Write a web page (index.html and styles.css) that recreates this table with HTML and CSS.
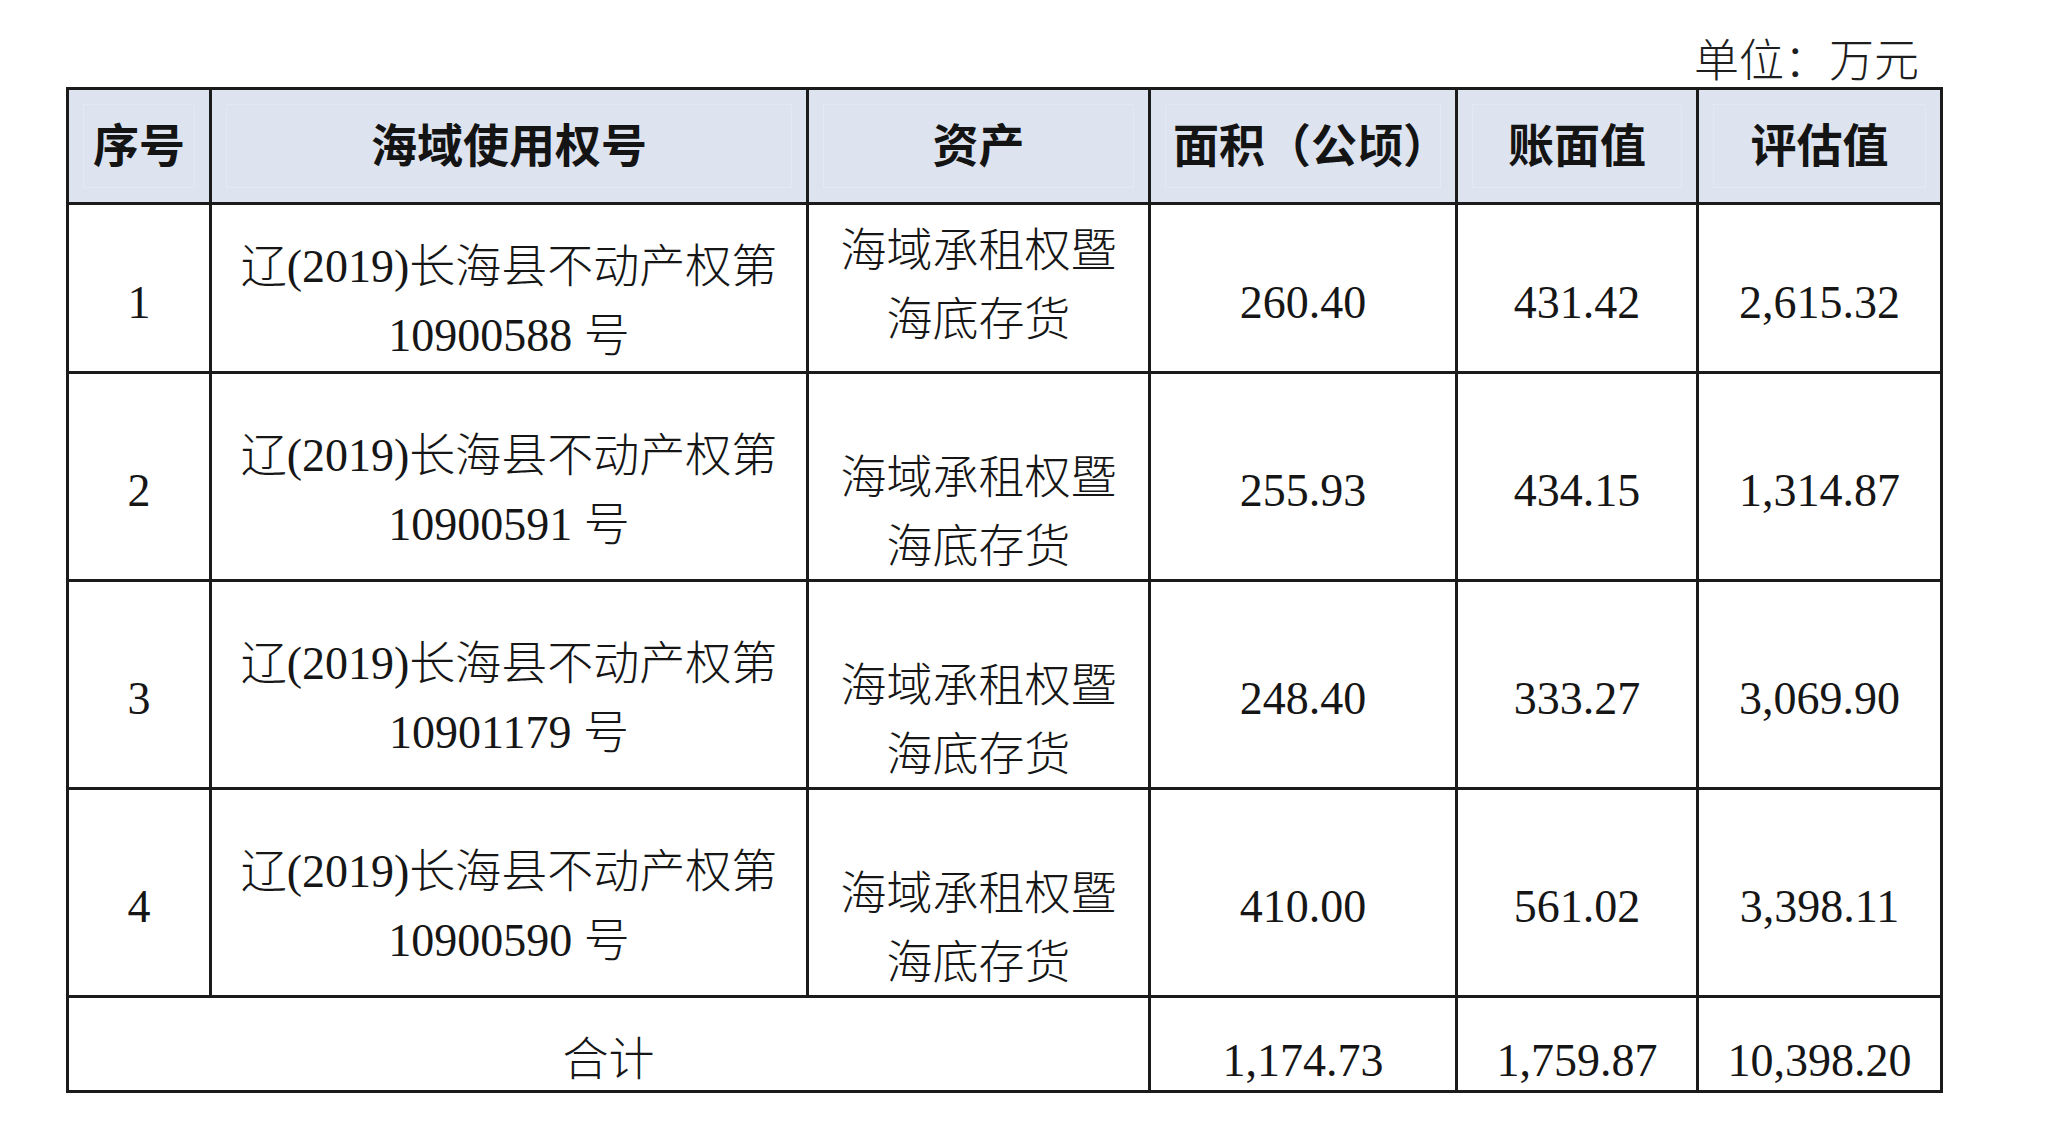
FILE: index.html
```html
<!DOCTYPE html>
<html lang="zh-CN">
<head>
<meta charset="utf-8">
<title>海域使用权</title>
<link rel="stylesheet" href="styles.css">
</head>
<body>
<div class="page">
  <div class="unit">单位：万元</div>
  <table class="tbl">
    <colgroup>
      <col class="c1"><col class="c2"><col class="c3"><col class="c4"><col class="c5"><col class="c6">
    </colgroup>
    <thead>
      <tr class="head">
        <th>序号</th>
        <th>海域使用权号</th>
        <th>资产</th>
        <th class="area">面积（公顷）</th>
        <th>账面值</th>
        <th>评估值</th>
      </tr>
    </thead>
    <tbody>
      <tr class="r1">
        <td class="num">1</td>
        <td class="cert">辽(2019)长海县不动产权第<br>10900588 号</td>
        <td class="asset asset-top">海域承租权暨<br>海底存货</td>
        <td class="num">260.40</td>
        <td class="num">431.42</td>
        <td class="num">2,615.32</td>
      </tr>
      <tr class="rn">
        <td class="num">2</td>
        <td class="cert">辽(2019)长海县不动产权第<br>10900591 号</td>
        <td class="asset">海域承租权暨<br>海底存货</td>
        <td class="num">255.93</td>
        <td class="num">434.15</td>
        <td class="num">1,314.87</td>
      </tr>
      <tr class="rn">
        <td class="num">3</td>
        <td class="cert">辽(2019)长海县不动产权第<br>10901179 号</td>
        <td class="asset">海域承租权暨<br>海底存货</td>
        <td class="num">248.40</td>
        <td class="num">333.27</td>
        <td class="num">3,069.90</td>
      </tr>
      <tr class="rn">
        <td class="num">4</td>
        <td class="cert">辽(2019)长海县不动产权第<br>10900590 号</td>
        <td class="asset">海域承租权暨<br>海底存货</td>
        <td class="num">410.00</td>
        <td class="num">561.02</td>
        <td class="num">3,398.11</td>
      </tr>
      <tr class="total">
        <td colspan="3" class="sum-label">合计</td>
        <td class="sum">1,174.73</td>
        <td class="sum">1,759.87</td>
        <td class="sum">10,398.20</td>
      </tr>
    </tbody>
  </table>
</div>
</body>
</html>
```

FILE: styles.css
```css
html, body {
  margin: 0;
  padding: 0;
  background: #ffffff;
}

.page {
  padding: 29px 0 0 66px;
  width: 1874px;
  font-family: "Liberation Serif", "Noto Sans CJK SC", serif;
  color: #161616;
}

.unit {
  height: 58px;
  line-height: 58px;
  font-size: 45px;
  font-weight: 300;
  text-align: right;
  padding-right: 21px;
  font-family: "Noto Sans CJK SC", sans-serif;
  color: #1e1e1e;
}

.tbl {
  width: 1874px;
  border-collapse: collapse;
  table-layout: fixed;
}

.c1 { width: 143px; }
.c2 { width: 597px; }
.c3 { width: 342px; }
.c4 { width: 307px; }
.c5 { width: 241px; }
.c6 { width: 244px; }

.tbl th, .tbl td {
  border: 3px solid #1b1b1b;
  padding: 0;
  text-align: center;
  vertical-align: middle;
  font-size: 46px;
  line-height: 69px;
  white-space: nowrap;
}

.tbl th {
  background: #dde4f0;
  font-family: "Noto Sans CJK SC", sans-serif;
  font-weight: 700;
  color: #141414;
  line-height: 56px;
  padding-bottom: 8px;
  box-shadow: inset 0 0 0 14px #dde4f0, inset 0 0 0 15px #e3e9f3;
}

.tbl th.area {
  padding-left: 16px;
}

.head { height: 115px; }
.r1 { height: 169px; }
.rn { height: 208px; }
.total { height: 95px; }

.cert {
  padding-top: 26px !important;
  font-weight: 300;
}

.asset {
  padding-top: 62px !important;
  font-family: "Noto Sans CJK SC", sans-serif;
  font-weight: 300;
}

.asset-top {
  padding-top: 0 !important;
  padding-bottom: 14px !important;
}

.num {
  padding-top: 28px !important;
}

.tbl td.sum-label {
  line-height: 56px;
  padding-top: 22px;
  font-family: "Noto Sans CJK SC", sans-serif;
  font-weight: 300;
}

.tbl td.sum {
  line-height: 56px;
  padding-top: 34px;
}
```
